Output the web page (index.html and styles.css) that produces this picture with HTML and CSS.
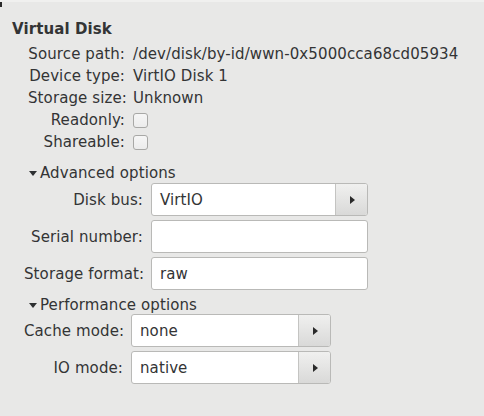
FILE: index.html
```html
<!DOCTYPE html>
<html>
<head>
<meta charset="utf-8">
<link rel="stylesheet" href="styles.css">
</head>
<body>
<div class="panel">
  <div class="title">Virtual Disk</div>
  <div class="info">
    <div class="lbl">Source path:</div><div class="val">/dev/disk/by-id/wwn-0x5000cca68cd05934</div>
    <div class="lbl">Device type:</div><div class="val">VirtIO Disk 1</div>
    <div class="lbl">Storage size:</div><div class="val">Unknown</div>
    <div class="lbl">Readonly:</div><div class="val"><span class="check"></span></div>
    <div class="lbl">Shareable:</div><div class="val"><span class="check"></span></div>
  </div>
  <div class="expander adv"><span class="tri"></span>Advanced options</div>
  <div class="form adv-grid">
    <div class="flbl">Disk bus:</div>
    <div class="combo"><span class="ctext">VirtIO</span><span class="cbtn"><span class="arrow"></span></span></div>
    <div class="flbl">Serial number:</div>
    <div class="entry"></div>
    <div class="flbl">Storage format:</div>
    <div class="entry"><span class="ctext">raw</span></div>
  </div>
  <div class="expander perf"><span class="tri"></span>Performance options</div>
  <div class="form perf-grid">
    <div class="flbl">Cache mode:</div>
    <div class="combo"><span class="ctext">none</span><span class="cbtn"><span class="arrow"></span></span></div>
    <div class="flbl">IO mode:</div>
    <div class="combo"><span class="ctext">native</span><span class="cbtn"><span class="arrow"></span></span></div>
  </div>
</div>
</body>
</html>
```
FILE: styles.css
```css
html, body {
  margin: 0;
  padding: 0;
}
body {
  width: 484px;
  height: 416px;
  background: #e8e8e7;
  font-family: "DejaVu Sans", sans-serif;
  font-size: 15px;
  letter-spacing: 0.1px;
  color: #333435;
  position: relative;
  overflow: hidden;
  border-top: 2px solid #f0f0ef;
  box-sizing: border-box;
}
body::before {
  content: "";
  position: absolute;
  left: 0;
  top: -2px;
  width: 2px;
  height: 7px;
  background: #2a2a2a;
}
.panel {
  padding: 16px 0 0 12px;
}
.title {
  font-weight: bold;
  line-height: 22px;
  margin-bottom: 3px;
}
.info {
  display: grid;
  grid-template-columns: 97px auto;
  column-gap: 8px;
  grid-auto-rows: 22px;
  margin-left: 16px;
  align-items: center;
}
.lbl {
  text-align: right;
  white-space: nowrap;
}
.val {
  white-space: nowrap;
  display: flex;
  align-items: center;
}
.check {
  display: inline-block;
  width: 13px;
  height: 13px;
  border: 1px solid #a8a8a6;
  border-radius: 3px;
  background: linear-gradient(#f6f6f6, #ececec);
  margin-top: 1px;
}
.expander {
  display: flex;
  align-items: center;
  line-height: 20px;
  height: 20px;
  margin-left: 17px;
}
.expander.adv {
  margin-top: 10px;
  margin-bottom: 0;
}
.expander.perf {
  height: 16px;
  line-height: 16px;
  margin-top: 7px;
  margin-bottom: 1px;
}
.tri {
  width: 0;
  height: 0;
  border-left: 4px solid transparent;
  border-right: 4px solid transparent;
  border-top: 5px solid #2e3032;
  margin-right: 3px;
  margin-top: 1px;
}
.form {
  display: grid;
  column-gap: 8px;
  row-gap: 4px;
  grid-auto-rows: 33px;
  margin-left: 12px;
  align-items: center;
}
.adv-grid {
  grid-template-columns: 119px 217px;
}
.perf-grid {
  grid-template-columns: 99px 200px;
}
.flbl {
  text-align: right;
  white-space: nowrap;
}
.combo, .entry {
  height: 33px;
  box-sizing: border-box;
  border: 1px solid #b9b9b7;
  border-radius: 3px;
  background: #ffffff;
  display: flex;
  align-items: center;
  overflow: hidden;
}
.ctext {
  flex: 1;
  padding-left: 8px;
  white-space: nowrap;
}
.cbtn {
  width: 32px;
  height: 100%;
  box-sizing: border-box;
  border-left: 1px solid #c4c4c2;
  background: linear-gradient(#f0f0ef, #d9d9d8);
  display: flex;
  align-items: center;
  justify-content: center;
}
.arrow {
  width: 0;
  height: 0;
  border-top: 4.5px solid transparent;
  border-bottom: 4.5px solid transparent;
  border-left: 5px solid #2a2a2a;
  margin-left: 2px;
}
```
